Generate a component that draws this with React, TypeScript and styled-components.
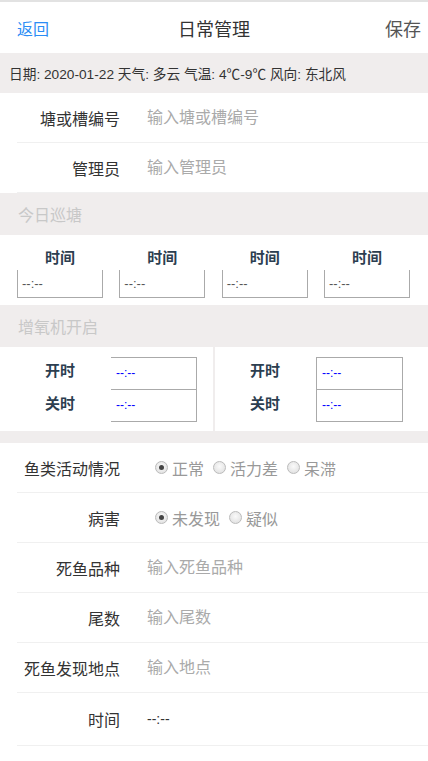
import styled, { createGlobalStyle } from "styled-components";

const GlobalStyle = createGlobalStyle`
  body {
    margin: 0;
    background: #fff;
    font-family: "Liberation Sans", "Noto Sans CJK SC", sans-serif;
    color: #333;
  }
  input::placeholder {
    color: #aaa;
  }
`;

const patrolTimes = ["时间", "时间", "时间", "时间"];

export default function App() {
  return (
    <Page>
      <GlobalStyle />
      <Header>
        <BackLink>返回</BackLink>
        <Title>日常管理</Title>
        <SaveLink>保存</SaveLink>
      </Header>
      <WeatherBar>日期: 2020-01-22 天气: 多云 气温: 4℃-9℃ 风向: 东北风</WeatherBar>

      <FormRow>
        <Label>塘或槽编号</Label>
        <TextInput placeholder="输入塘或槽编号" />
      </FormRow>
      <FormRow>
        <Label>管理员</Label>
        <TextInput placeholder="输入管理员" />
      </FormRow>

      <SectionTitle>今日巡塘</SectionTitle>
      <PatrolGrid>
        {patrolTimes.map((t, i) => (
          <PatrolCell key={i}>
            <BoldLabel>{t}</BoldLabel>
            <PatrolBox>--:--</PatrolBox>
          </PatrolCell>
        ))}
      </PatrolGrid>

      <SectionTitle>增氧机开启</SectionTitle>
      <AeratorBlock>
        <AeratorHalf $shift={10}>
          <AeratorLabels>
            <BoldLabel>开时</BoldLabel>
            <BoldLabel>关时</BoldLabel>
          </AeratorLabels>
          <AeratorBox $leftBorder={false}>
            <AeratorCell>--:--</AeratorCell>
            <AeratorCell>--:--</AeratorCell>
          </AeratorBox>
        </AeratorHalf>
        <AeratorHalf $shift={0}>
          <AeratorLabels>
            <BoldLabel>开时</BoldLabel>
            <BoldLabel>关时</BoldLabel>
          </AeratorLabels>
          <AeratorBox $leftBorder>
            <AeratorCell>--:--</AeratorCell>
            <AeratorCell>--:--</AeratorCell>
          </AeratorBox>
        </AeratorHalf>
      </AeratorBlock>
      <Spacer />

      <FormRow>
        <Label>鱼类活动情况</Label>
        <RadioGroup>
          <RadioOption>
            <RadioDot $checked />
            正常
          </RadioOption>
          <RadioOption>
            <RadioDot />
            活力差
          </RadioOption>
          <RadioOption>
            <RadioDot />
            呆滞
          </RadioOption>
        </RadioGroup>
      </FormRow>
      <FormRow>
        <Label>病害</Label>
        <RadioGroup>
          <RadioOption>
            <RadioDot $checked />
            未发现
          </RadioOption>
          <RadioOption>
            <RadioDot />
            疑似
          </RadioOption>
        </RadioGroup>
      </FormRow>
      <FormRow>
        <Label>死鱼品种</Label>
        <TextInput placeholder="输入死鱼品种" />
      </FormRow>
      <FormRow>
        <Label>尾数</Label>
        <TextInput placeholder="输入尾数" />
      </FormRow>
      <FormRow>
        <Label>死鱼发现地点</Label>
        <TextInput placeholder="输入地点" />
      </FormRow>
      <FormRow $tall>
        <Label>时间</Label>
        <TimeValue>--:--</TimeValue>
      </FormRow>
    </Page>
  );
}

const Page = styled.div`
  width: 428px;
  min-height: 761px;
  background: #fff;
  border-top: 2px solid #e2e2e2;
  box-sizing: border-box;
`;

const Header = styled.div`
  height: 51px;
  display: grid;
  grid-template-columns: 1fr auto 1fr;
  align-items: center;
  padding: 0 7px;
`;

const BackLink = styled.span`
  font-size: 16px;
  color: #2b8df5;
  margin-left: 10px;
`;

const Title = styled.span`
  font-size: 18px;
  color: #333;
`;

const SaveLink = styled.span`
  font-size: 18px;
  color: #555;
  text-align: right;
`;

const WeatherBar = styled.div`
  height: 40px;
  background: #f0eded;
  display: flex;
  align-items: center;
  padding-left: 9px;
  font-size: 13.7px;
  color: #333;
`;

const FormRow = styled.div<{ $tall?: boolean }>`
  height: ${(p) => (p.$tall ? 52 : 49)}px;
  margin-left: 17px;
  border-bottom: 1px solid #f0f0f0;
  display: flex;
  align-items: center;
`;

const Label = styled.div`
  width: 103px;
  text-align: right;
  font-size: 16px;
  color: #333;
  flex-shrink: 0;
`;

const TextInput = styled.input`
  border: none;
  outline: none;
  margin-left: 27px;
  padding: 0;
  font-size: 16px;
  font-family: inherit;
  color: #333;
  background: transparent;
  flex: 1;
`;

const TimeValue = styled.span`
  margin-left: 27px;
  font-size: 14px;
  color: #333;
`;

const SectionTitle = styled.div`
  height: 42px;
  background: #f0eded;
  display: flex;
  align-items: center;
  padding-left: 18px;
  font-size: 16px;
  color: #c8c8c8;
`;

const PatrolGrid = styled.div`
  display: grid;
  grid-template-columns: repeat(4, 86px);
  justify-content: space-between;
  padding: 12px 18px 7px 17px;
`;

const PatrolCell = styled.div`
  display: flex;
  flex-direction: column;
  align-items: stretch;
  text-align: center;
`;

const BoldLabel = styled.div`
  font-size: 15px;
  font-weight: bold;
  color: #2c3e50;
  line-height: 22px;
`;

const PatrolBox = styled.div`
  height: 27px;
  margin-top: 1px;
  border: 1px solid #aaa;
  border-top: none;
  text-align: left;
  padding-left: 4px;
  font-size: 13px;
  line-height: 27px;
  color: #555;
`;

const AeratorBlock = styled.div`
  display: grid;
  grid-template-columns: 213px 2px 1fr;
  background: #f0eded;
  height: 84px;
  & > :last-child {
    grid-column: 3;
  }
`;

const AeratorHalf = styled.div<{ $shift: number }>`
  background: #fff;
  display: flex;
  align-items: center;
  padding-left: ${(p) => 20 + p.$shift}px;
  &:first-child {
    grid-column: 1;
  }
`;

const AeratorLabels = styled.div`
  width: 60px;
  display: flex;
  flex-direction: column;
  gap: 11px;
  margin-top: -4px;
  text-align: center;
`;

const AeratorBox = styled.div<{ $leftBorder?: boolean }>`
  margin-left: 21px;
  width: 85px;
  border: 1px solid #aaa;
  border-left: ${(p) => (p.$leftBorder ? "1px solid #aaa" : "none")};
`;

const AeratorCell = styled.div`
  height: 31px;
  display: flex;
  align-items: center;
  padding-left: 5px;
  font-size: 12px;
  color: #0000ff;
  & + & {
    border-top: 1px solid #aaa;
  }
`;

const Spacer = styled.div`
  height: 12px;
  background: #f0eded;
`;

const RadioGroup = styled.div`
  display: flex;
  align-items: center;
  gap: 9px;
  margin-left: 35px;
`;

const RadioOption = styled.label`
  display: flex;
  align-items: center;
  gap: 4px;
  font-size: 16px;
  color: #999;
`;

const RadioDot = styled.span<{ $checked?: boolean }>`
  width: 11px;
  height: 11px;
  border-radius: 50%;
  border: 1px solid #bbb;
  background: radial-gradient(circle at 50% 40%, #fafafa, #dcdcdc);
  display: inline-flex;
  align-items: center;
  justify-content: center;
  &::after {
    content: "";
    width: 5px;
    height: 5px;
    border-radius: 50%;
    background: #444;
    display: ${(p) => (p.$checked ? "block" : "none")};
  }
`;
